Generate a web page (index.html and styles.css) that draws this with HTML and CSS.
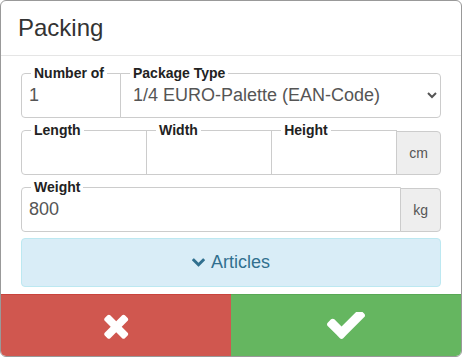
FILE: index.html
```html
<!DOCTYPE html>
<html lang="en">
<head>
    <meta charset="UTF-8">
    <title>Packing</title>
    <link rel="stylesheet" href="styles.css">
</head>
<body>

<div class="modal">
    <div class="modal-header">
        <h4 class="modal-title">Packing</h4>
    </div>

    <div class="modal-body">
        <!-- Anzahl + Verpackungsart -->
        <div class="field-row">
            <fieldset class="field field-qty">
                <legend>Number of</legend>
                <input type="text" value="1">
            </fieldset>
            <fieldset class="field field-last">
                <legend>Package Type</legend>
                <select>
                    <option>1/4 EURO-Palette (EAN-Code)</option>
                </select>
            </fieldset>
        </div>

        <!-- Abmessungen -->
        <div class="field-row">
            <fieldset class="field field-dim">
                <legend>Length</legend>
                <input type="text">
            </fieldset>
            <fieldset class="field field-dim field-mid">
                <legend>Width</legend>
                <input type="text">
            </fieldset>
            <fieldset class="field field-dim field-mid">
                <legend>Height</legend>
                <input type="text">
            </fieldset>
            <span class="addon">cm</span>
        </div>

        <!-- Gewicht -->
        <div class="field-row">
            <fieldset class="field field-grow">
                <legend>Weight</legend>
                <input type="text" value="800">
            </fieldset>
            <span class="addon">kg</span>
        </div>

        <button class="btn-articles">
            <svg class="chevron" viewBox="90 533 1612 1035" width="13" height="9">
                <path d="M1683 808l-742 741q-19 19-45 19t-45-19l-742-741q-19-19-19-45.5t19-45.5l166-165q19-19 45-19t45 19l531 531 531-531q19-19 45-19t45 19l166 165q19 19 19 45.5t-19 45.5z"/>
            </svg>
            Articles
        </button>
    </div>

    <div class="modal-footer">
        <button class="btn-footer btn-cancel">
            <svg viewBox="262 230 1248 1334" width="26" height="27">
                <path d="M1490 1322q0 40-28 68l-136 136q-28 28-68 28t-68-28l-294-294-294 294q-28 28-68 28t-68-28l-136-136q-28-28-28-68t28-68l294-294-294-294q-28-28-28-68t28-68l136-136q28-28 68-28t68 28l294 294 294-294q28-28 68-28t68 28l136 136q28 28 28 68t-28 68l-294 294 294 294q28 28 28 68z"/>
            </svg>
        </button>
        <button class="btn-footer btn-ok">
            <svg viewBox="121 430 1550 1092" width="38" height="27">
                <path d="M1671 566q0 40-28 68l-724 724-136 136q-28 28-68 28t-68-28l-136-136-362-362q-28-28-28-68t28-68l136-136q28-28 68-28t68 28l294 295 656-657q28-28 68-28t68 28l136 136q28 28 28 68z"/>
            </svg>
        </button>
    </div>
</div>

</body>
</html>
```

FILE: styles.css
```css
body {
    margin: 0;
    background-color: #fff;
    font-family: "Liberation Sans", Arial, sans-serif;
    color: #333;
}

.modal {
    width: 460px;
    height: 355px;
    border: 1px solid #999;
    border-radius: 6px;
    display: flex;
    flex-direction: column;
    overflow: hidden;
}

/* Kopf */
.modal-header {
    height: 54px;
    border-bottom: 1px solid #e5e5e5;
    padding: 0 17px;
    display: flex;
    align-items: center;
}

.modal-title {
    margin: 0;
    font-size: 24px;
    font-weight: normal;
    line-height: 26px;
    color: #333;
}

/* Formular */
.modal-body {
    flex: 1;
    padding: 9px 20px 7px;
}

.field-row {
    display: flex;
    align-items: flex-end;
    margin-bottom: 4px;
}

.field {
    margin: 0;
    padding: 0 0 8px;
    min-width: 0;
    border: 1px solid #ccc;
    border-radius: 4px;
}

.field legend {
    margin-left: 9px;
    padding: 0 3px;
    font-size: 14px;
    font-weight: bold;
    line-height: 16px;
    color: #222;
    white-space: nowrap;
}

.field input,
.field select {
    display: block;
    width: 100%;
    box-sizing: border-box;
    height: 28px;
    border: none;
    background: transparent;
    font-family: inherit;
    font-size: 18px;
    color: #555;
    outline: none;
}

.field input {
    padding: 0 7px;
}

.field select {
    padding: 0 6px 0 8px;
}

.field-qty {
    width: 100px;
    box-sizing: border-box;
    border-radius: 4px 0 0 4px;
}

.field-last {
    flex: 1;
    margin-left: -1px;
    border-radius: 0 4px 4px 0;
}

.field-dim {
    flex: 1;
    border-radius: 4px 0 0 4px;
}

.field-mid {
    margin-left: -1px;
    border-radius: 0;
}

.field-grow {
    flex: 1;
    border-radius: 4px 0 0 4px;
}

.addon {
    height: 44px;
    box-sizing: border-box;
    margin-left: -1px;
    padding: 0 12px;
    display: flex;
    align-items: center;
    background-color: #eee;
    border: 1px solid #ccc;
    border-radius: 0 4px 4px 0;
    font-size: 14px;
    color: #555;
}

.btn-articles {
    width: 100%;
    height: 49px;
    margin-top: 6px;
    display: flex;
    align-items: center;
    justify-content: center;
    gap: 6px;
    background-color: #d9edf7;
    border: 1px solid #bce8f1;
    border-radius: 4px;
    font-family: inherit;
    font-size: 18px;
    color: #31708f;
    cursor: pointer;
}

.chevron {
    fill: #31708f;
}

/* Fuss mit den zwei Knöpfen */
.modal-footer {
    display: flex;
    height: 62px;
}

.btn-footer {
    flex: 1;
    margin: 0;
    border: none;
    display: flex;
    align-items: center;
    justify-content: center;
    cursor: pointer;
}

.btn-footer svg {
    fill: #fff;
}

.btn-cancel {
    background-color: #d0574f;
    border-top: 1px solid #c9443d;
}

.btn-ok {
    background-color: #65b660;
    border-top: 1px solid #59a855;
}
```
